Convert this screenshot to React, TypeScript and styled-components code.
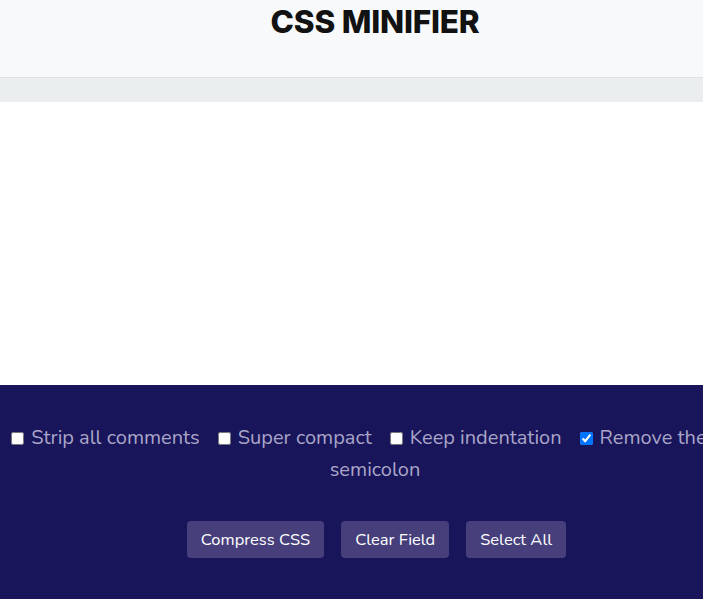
import React, { useState } from "react";
import styled, { createGlobalStyle } from "styled-components";

const Global = createGlobalStyle`
  html, body { margin: 0; padding: 0; overflow: hidden; background: #ffffff; }
  body { font-family: "Nunito", "Open Sans", Lato, sans-serif; }
`;

const Page = styled.div`
  width: 750px;
  display: flex;
  flex-direction: column;
`;

const Header = styled.header`
  height: 77px;
  background: #f8f9fb;
  border-bottom: 1px solid #dee2e6;
  display: flex;
  justify-content: center;
`;

const Title = styled.h1`
  margin: 1px 0 0;
  font-family: Inter, "Open Sans", sans-serif;
  font-weight: 800;
  font-size: 31.5px;
  line-height: 42px;
  letter-spacing: -0.2px;
  color: #121212;
`;

const Band = styled.div`
  height: 24px;
  background: #eaeeee;
`;

const Editor = styled.textarea`
  display: block;
  height: 283px;
  border: none;
  outline: none;
  resize: none;
  background: #ffffff;
  margin: 0;
  padding: 0;
`;

const Footer = styled.section`
  background: #19155a;
  height: 214px;
  padding-top: 37px;
  box-sizing: border-box;
  display: flex;
  flex-direction: column;
  align-items: center;
`;

const Options = styled.div`
  width: 750px;
  text-align: center;
  font-size: 20px;
  line-height: 32px;
  color: #a9a5c8;
`;

const Option = styled.label`
  margin-right: 18px;
  white-space: nowrap;
  &:first-child { margin-left: 6px; }
  &:last-child { margin-right: 0; white-space: normal; }
  input { margin: 0 7px 0 0; width: 13px; height: 13px; vertical-align: -1px; }
`;

const Buttons = styled.div`
  display: flex;
  gap: 17px;
  margin-top: 35px;
  padding-left: 3px;
`;

const Button = styled.button`
  background: #463f7c;
  color: #ffffff;
  border: none;
  border-radius: 4px;
  height: 37px;
  padding: 0 14px;
  font-family: "Nunito", "Open Sans", Lato, sans-serif;
  font-size: 16.5px;
  cursor: pointer;
`;

const options = [
  { label: "Strip all comments", checked: false },
  { label: "Super compact", checked: false },
  { label: "Keep indentation", checked: false },
  { label: "Remove the last semicolon", checked: true },
];

export default function App() {
  const [state, setState] = useState(options.map((o) => o.checked));
  return (
    <Page>
      <Global />
      <Header>
        <Title>CSS MINIFIER</Title>
      </Header>
      <Band />
      <Editor />
      <Footer>
        <Options>
          {options.map((o, i) => (
            <Option key={o.label}>
              <input
                type="checkbox"
                checked={state[i]}
                onChange={() => setState(state.map((v, j) => (j === i ? !v : v)))}
              />
              {o.label}
            </Option>
          ))}
        </Options>
        <Buttons>
          <Button>Compress CSS</Button>
          <Button>Clear Field</Button>
          <Button>Select All</Button>
        </Buttons>
      </Footer>
    </Page>
  );
}
